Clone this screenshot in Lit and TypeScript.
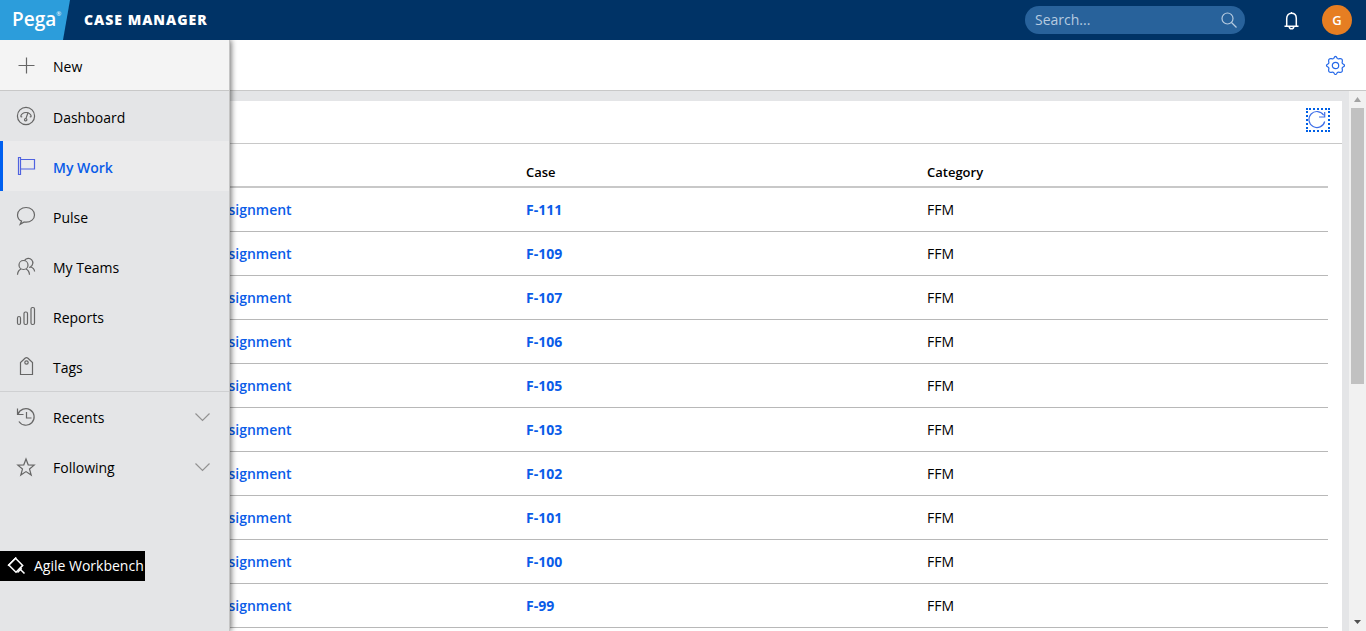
import { LitElement, html, css, svg, TemplateResult } from "lit";
import { customElement } from "lit/decorators.js";
import { classMap } from "lit/directives/class-map.js";

const icons: Record<string, TemplateResult> = {
  plus: svg`<path d="M2.500 10.500H18.500M10.500 2.500V18.500"/>`,
  gauge: svg`<circle cx="10" cy="10" r="8.600"/><path d="M4.600 10.600a5.600 5.600 0 0 1 10.800 0M4.600 10.600l1.600.200M15.400 10.600l-1.600.200"/><path d="M12 6.600L10 12.400"/><circle cx="9.700" cy="13.700" r="1.200"/>`,
  flag: svg`<path d="M2.500 1.500h2v17h-2zM4.500 3.500h14v9.500h-14"/>`,
  bubble: svg`<path d="M5.600 15.100C3 13.900 1.500 11.500 1.500 8.900c0-4.200 3.800-7.400 8.600-7.400s8.400 3.200 8.400 7.400-3.700 7.300-8.400 7.300c-.7 0-1.300 0-1.900-.2L4.200 18.300z"/>`,
  people: svg`<circle cx="7.500" cy="9" r="4.500"/><path d="M1.500 18.700c.2-2.900 1.500-4.800 3.600-5.700M13.500 18.700c-.2-2.900-1.500-4.800-3.600-5.700M8.600 4.400a4.500 4.500 0 1 1 5.800 6.500M14.600 11l-1.500.4M14.600 11c2.300.6 3.700 2 4 4.500"/>`,
  bars: svg`<rect x="1.500" y="10.500" width="3" height="8" rx="1.500"/><rect x="8" y="6" width="3.500" height="12.500" rx="1.500"/><rect x="15" y="1.500" width="3.500" height="17" rx="1.500"/>`,
  tag: svg`<path d="M4.500 18.500V6.500L9 2.200Q10.500 1 12 2.200L16.500 6.500v12z"/><circle cx="10.500" cy="6.500" r="1.700"/>`,
  history: svg`<path d="M1.500 1.500v6h6M2 7.200A8.300 8.300 0 1 1 2.900 14.500M10.500 5v6h5"/>`,
  star: svg`<path d="M10 2l2.200 5.800 6 .3-4.700 3.900 1.700 6L10 14.600 4.800 18l1.700-6L1.800 8.100l6-.3z"/>`,
  chevron: svg`<path d="M3.500 6.500L10.500 13.500l7-7"/>`,
  search: svg`<circle cx="8.500" cy="8.500" r="5.500"/><path d="M12.500 12.500L17.500 17.500"/>`,
  bell: svg`<path d="M3.500 16.200h14M5.700 16V8.500C5.700 5.400 7.500 3.300 10.500 3.300s4.800 2.100 4.800 5.200V16M10.500 3.300V2M8.200 16.500c0 3.100 4.600 3.100 4.600 0"/>`,
  gear: svg`<circle cx="10.500" cy="10.500" r="3.200"/><path transform="translate(.5 .5)" d="M8.300 2.800Q10-.900 11.700 2.800Q12.600 3.700 13.900 3.200Q17.300 2.700 16.800 6.100Q16.300 7.400 17.200 8.300Q20.900 10 17.200 11.700Q16.300 12.600 16.800 13.900Q17.300 17.300 13.900 16.800Q12.600 16.300 11.700 17.200Q10 20.900 8.300 17.200Q7.400 16.300 6.100 16.800Q2.700 17.300 3.200 13.900Q3.700 12.600 2.800 11.700Q-.900 10 2.800 8.300Q3.700 7.400 3.200 6.100Q2.700 2.700 6.100 3.200Q7.400 3.700 8.300 2.800z"/>`,
  refresh: svg`<path d="M15.700 5.200A8 8 0 1 0 16.700 11.500M16.700 2V7H11"/>`,
  diamond: svg`<path d="M8.500 2.200L15.700 9.400 9 16.200 1.800 9z"/><path d="M1 9.800L9.300 1.500M10.500 16.500L14.700 12.300M12.200 12.200L17.500 17.500"/>`,
};

const icon = (name: string) =>
  html`<svg class="icon icon-${name}" viewBox="0 0 20 20" aria-hidden="true">${icons[name]}</svg>`;

const iconStyles = css`
  * {
    box-sizing: border-box;
  }
  .icon {
    display: block;
    flex: none;
    width: 20px;
    height: 20px;
    fill: none;
    stroke: currentColor;
    stroke-width: 1.2;
  }
  button {
    font: inherit;
    color: inherit;
    background: none;
    border: 0;
    padding: 0;
    cursor: pointer;
  }
  a {
    text-decoration: none;
    color: inherit;
  }
`;

@customElement("app-header")
class AppHeader extends LitElement {
  static styles = [
    iconStyles,
    css`
      :host {
        display: flex;
        align-items: center;
        height: 40px;
        background: #003366;
        color: #fff;
      }
      .logo {
        width: 70px;
        height: 40px;
        padding-left: 12px;
        background: #2c9ddb;
        clip-path: polygon(0 0, 100% 0, 63px 100%, 0 100%);
        font-size: 19px;
        font-weight: 600;
        line-height: 38px;
        display: flex;
      }
      .mark {
        font-size: 6px;
        font-weight: 400;
        line-height: 28px;
      }
      .title {
        flex: 1;
        margin: 0 0 0 14px;
        font-size: 14px;
        font-weight: 800;
        letter-spacing: 1px;
      }
      .search {
        display: flex;
        align-items: center;
        width: 220px;
        height: 28px;
        padding: 0 6px 0 10px;
        border-radius: 14px;
        background: #28629b;
        color: #b6cbe0;
      }
      .field {
        flex: 1;
        min-width: 0;
        padding: 0;
        border: 0;
        outline: 0;
        background: none;
        font: inherit;
        color: #fff;
      }
      .field::placeholder {
        color: #b6cbe0;
        opacity: 1;
      }
      .bell {
        margin: 0 21px 0 36px;
      }
      .bell .icon {
        stroke-width: 1.5;
      }
      .avatar {
        width: 30px;
        height: 30px;
        margin-right: 14px;
        border-radius: 50%;
        background: #e67e22;
        font-size: 13px;
        font-weight: 600;
      }
    `,
  ];
  render() {
    return html`
      <a class="logo" href="#">Pega<span class="mark">®</span></a>
      <h1 class="title">CASE MANAGER</h1>
      <form class="search" role="search">
        <input class="field" type="text" placeholder="Search..." aria-label="Search" />
        <button type="button" aria-label="Run search">${icon("search")}</button>
      </form>
      <button class="bell" aria-label="Notifications">${icon("bell")}</button>
      <button class="avatar" aria-label="Operator menu">G</button>
    `;
  }
}

const links = [
  { label: "Dashboard", icon: "gauge" },
  { label: "My Work", icon: "flag", current: true },
  { label: "Pulse", icon: "bubble" },
  { label: "My Teams", icon: "people" },
  { label: "Reports", icon: "bars" },
  { label: "Tags", icon: "tag" },
];

@customElement("app-nav")
class AppNav extends LitElement {
  static styles = [
    iconStyles,
    css`
      :host {
        display: block;
        background: #e4e5e7;
        border-right: 1px solid #c4c4c4;
        box-shadow: 1px 0 6px rgba(0, 0, 0, 0.6);
        color: #000;
      }
      .item {
        display: flex;
        align-items: center;
        width: 100%;
        height: 50px;
        padding: 0 17px 0 16px;
        gap: 17px;
        text-align: left;
      }
      .label {
        flex: 1;
        padding-top: 4px;
      }
      .item .icon {
        color: #666;
      }
      .new {
        height: 51px;
        background: #f4f4f4;
        border-bottom: 1px solid #c8c8c8;
      }
      .current {
        background: #ebebec;
        box-shadow: inset 3px 0 #0060f0;
        color: #0a5ce8;
        font-weight: 600;
      }
      .current .icon {
        color: #4f62e0;
      }
      .more {
        border-top: 1px solid #cfd0d2;
      }
      .more .label {
        padding-top: 1px;
      }
      .item .icon-chevron {
        color: #929292;
      }
    `,
  ];
  render() {
    return html`
      <button class="item new">${icon("plus")}<span class="label">New</span></button>
      <nav>
        ${links.map(
          (l) => html`<a class=${classMap({ item: true, current: !!l.current })} href="#">
            ${icon(l.icon)}<span class="label">${l.label}</span></a>`
        )}
      </nav>
      <div class="more">
        <button class="item" aria-expanded="false">
          ${icon("history")}<span class="label">Recents</span>${icon("chevron")}
        </button>
        <button class="item" aria-expanded="false">
          ${icon("star")}<span class="label">Following</span>${icon("chevron")}
        </button>
      </div>
    `;
  }
}

const cases = [111, 109, 107, 106, 105, 103, 102, 101, 100, 99];

@customElement("work-list")
class WorkList extends LitElement {
  static styles = [
    iconStyles,
    css`
      :host {
        display: block;
        background: #fff;
      }
      .bar {
        display: flex;
        align-items: center;
        justify-content: flex-end;
        height: 43px;
        padding: 0 12px;
        border-bottom: 1px solid #c8c8c8;
      }
      .refresh {
        width: 24px;
        height: 24px;
        margin-bottom: 4px;
        border: 2px dotted #0060e6;
        color: #3f6fe8;
      }
      .body {
        padding: 0 14px 14px;
      }
      .list {
        width: 100%;
        table-layout: fixed;
        border-collapse: separate;
        border-spacing: 0;
      }
      .lead {
        width: 47px;
      }
      th {
        height: 44px;
        padding: 14px 0 0;
        border-bottom: 2px solid #c8c8c8;
        text-align: left;
        font-size: 13px;
        font-weight: 600;
      }
      td {
        height: 44px;
        padding: 0;
        border-bottom: 1px solid #b8b8b8;
      }
      .link {
        color: #0a5ce8;
        font-weight: 600;
      }
      .task {
        padding-left: 28px;
      }
      .case {
        font-weight: 700;
      }
    `,
  ];
  render() {
    return html`
      <div class="bar"><button class="refresh" aria-label="Refresh">${icon("refresh")}</button></div>
      <div class="body">
        <table class="list">
          <thead>
            <tr><th class="lead"></th><th></th><th>Case</th><th>Category</th></tr>
          </thead>
          <tbody>
            ${cases.map(
              (n) => html`<tr>
                <td></td>
                <td><a class="link task" href="#">Perform Assignment</a></td>
                <td><a class="link case" href="#">F-${n}</a></td>
                <td>FFM</td>
              </tr>`
            )}
          </tbody>
        </table>
      </div>
    `;
  }
}

@customElement("app-root")
class AppRoot extends LitElement {
  static styles = [
    iconStyles,
    css`
      :host {
        display: flex;
        flex-direction: column;
        height: 100vh;
        overflow: hidden;
        font: 14px/20px "Open Sans", "Noto Sans", sans-serif;
        color: #000;
      }
      app-header {
        flex: none;
      }
      .page {
        position: relative;
        flex: 1;
        min-height: 0;
        display: flex;
        flex-direction: column;
        overflow: hidden;
      }
      .tools {
        flex: none;
        display: flex;
        align-items: center;
        justify-content: flex-end;
        height: 51px;
        padding-right: 21px;
        border-bottom: 1px solid #c8c8c8;
        background: #fff;
        color: #2468e8;
      }
      .content {
        flex: 1;
        min-height: 0;
        display: flex;
        background: #e4e5e7;
      }
      .view {
        flex: 1;
        overflow: hidden;
        padding: 10px 7px 0 64px;
      }
      .track {
        display: flex;
        flex-direction: column;
        width: 17px;
        padding: 0 2px;
        background: #f1f1f1;
      }
      .arrow {
        width: 7px;
        height: 17px;
        margin: 0 auto;
        background: #a3a3a3;
        clip-path: polygon(50% 6px, 100% 11px, 0 11px);
      }
      .down {
        background: #505050;
        clip-path: polygon(0 6px, 100% 6px, 50% 10px);
      }
      .thumb {
        flex: 6;
        background: #c1c1c1;
      }
      .rest {
        flex: 5;
      }
      .drawer {
        position: absolute;
        top: 0;
        bottom: 0;
        left: 0;
        width: 230px;
      }
      .workbench {
        position: absolute;
        left: 0;
        bottom: 50px;
        display: flex;
        align-items: center;
        gap: 7px;
        height: 30px;
        padding: 0 1px 0 7px;
        background: #000;
        color: #fff;
      }
      .workbench .icon {
        stroke-width: 1.5;
      }
    `,
  ];
  render() {
    return html`
      <app-header></app-header>
      <div class="page">
        <div class="tools"><button aria-label="Settings">${icon("gear")}</button></div>
        <main class="content">
          <div class="view"><work-list></work-list></div>
          <div class="track" aria-hidden="true">
            <div class="arrow"></div>
            <div class="thumb"></div>
            <div class="rest"></div>
            <div class="arrow down"></div>
          </div>
        </main>
        <app-nav class="drawer"></app-nav>
        <button class="workbench">${icon("diamond")}Agile Workbench</button>
      </div>
    `;
  }
}
